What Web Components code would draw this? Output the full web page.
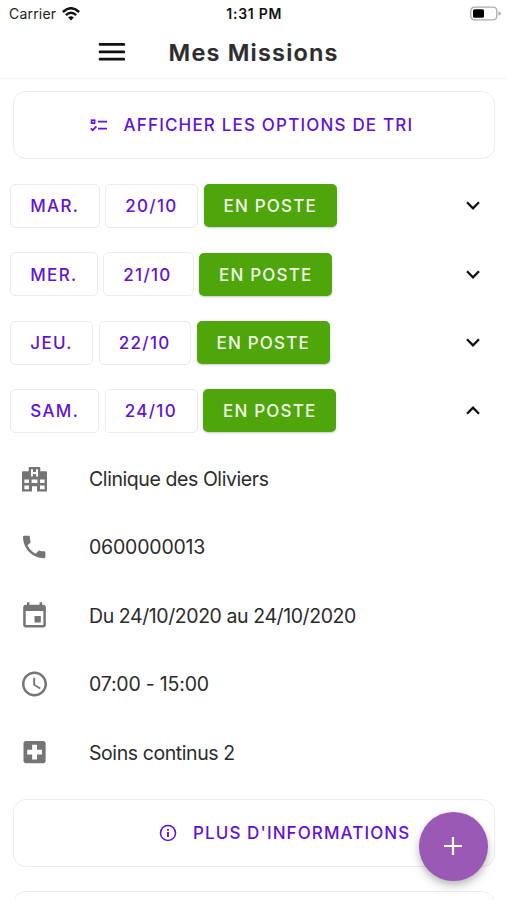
<!DOCTYPE html>
<html lang="fr">
<head>
<meta charset="utf-8">
<title>Mes Missions</title>
<style>
html, body { margin: 0; height: 900px; overflow: hidden; background: #fff; }
body { font-family: Inter, "Liberation Sans", sans-serif; color: #2b2b2b; }
</style>
</head>
<body>
<missions-app></missions-app>
<script>
const define = (name, html) => customElements.define(name, class extends HTMLElement {
  constructor() {
    super();
    this.attachShadow({ mode: 'open' }).innerHTML = html;
  }
});

const ICONS = {
  domain: '<path fill-rule="evenodd" d="M0 5.3Q0 4.3 1 4.3H6.7V1Q6.7 0 7.7 0H17.3Q18.3 0 18.3 1V4.3H24Q25 4.3 25 5.3V24.6H15V19.3H10V24.6H0ZM9 2.3V9.5H11V7H14V9.5H16V2.3H14V5H11V2.3ZM2.4 12.5V16.1H7V12.5ZM9.6 12.5V16.1H15.4V12.5ZM18 12.5V16.1H22.6V12.5ZM2.4 18.6V22.2H7V18.6ZM18 18.6V22.2H22.6V18.6Z"/>',
  phone: '<path transform="translate(-2.7 -2.9) scale(1.24)" d="M6.62 10.79c1.44 2.83 3.76 5.14 6.59 6.59l2.2-2.2c.27-.27.67-.36 1.02-.24 1.12.37 2.33.57 3.57.57.55 0 1 .45 1 1V20c0 .55-.45 1-1 1C10.61 21 3 13.39 3 4c0-.55.45-1 1-1h3.5c.55 0 1 .45 1 1 0 1.25.2 2.45.57 3.57.11.35.03.74-.25 1.02l-2.2 2.2z"/>',
  event: '<path transform="translate(-2.6 -3) scale(1.26)" d="M17 12h-5v5h5v-5zM16 1v2H8V1H6v2H5c-1.11 0-1.99.9-1.99 2L3 19c0 1.1.89 2 2 2h14c1.1 0 2-.9 2-2V5c0-1.1-.9-2-2-2h-1V1h-2zm3 18H5V8h14v11z"/>',
  clock: '<path transform="translate(-2.5 -2.9) scale(1.25)" d="M11.99 2C6.47 2 2 6.48 2 12s4.47 10 9.99 10C17.52 22 22 17.52 22 12S17.52 2 11.99 2zM12 20c-4.42 0-8-3.58-8-8s3.58-8 8-8 8 3.58 8 8-3.58 8-8 8zm.5-13H11v6l5.25 3.15.75-1.23-4.5-2.67z"/>',
  care: '<path transform="translate(-2.2 -2.6) scale(1.23)" d="M19 3H5c-1.1 0-1.99.9-1.99 2L3 19c0 1.1.9 2 2 2h14c1.1 0 2-.9 2-2V5c0-1.1-.9-2-2-2zm-1 11h-4v4h-4v-4H6v-4h4V6h4v4h4v4z"/>'
};

define('status-bar', `
<style>
:host { display: grid; grid-template-columns: 1fr auto 1fr; align-items: center; height: 27px; padding: 0 6px 0 9px; color: #222; box-sizing: border-box; font-size: 14px; }
.left { display: flex; align-items: center; gap: 6px; letter-spacing: .2px; }
.time { font-weight: 600; color: #111; font-size: 14px; letter-spacing: .73px; margin-left: -1.5px; }
.right { display: flex; justify-content: flex-end; }
svg { display: block; }
</style>
<div class="left"><span>Carrier</span>
<svg width="18" height="14" viewBox="0 0 18 14" fill="none" stroke="#111" stroke-width="2.4"><path d="M.9 5Q9-2.6 17.1 5M3.9 8.2Q9 3.2 14.1 8.2"/><path d="M6.2 10.4Q9 8 11.8 10.4L9 13.6Z" fill="#111" stroke="none"/></svg></div>
<span class="time">1:31 PM</span>
<div class="right"><svg width="31" height="16" viewBox="0 0 31 16"><rect x=".8" y="1.2" width="26" height="12.6" rx="3.6" fill="#fff" stroke="#aaa" stroke-width="1.3"/><rect x="3" y="3.3" width="11" height="8.4" rx="1.5"/><path d="M28.5 5.2Q31 5.9 31 7.4T28.5 9.6Z" fill="#aaa"/></svg></div>`);

define('app-header', `
<style>
:host { display: flex; align-items: center; height: 52px; padding: 0 0 0 98px; box-sizing: border-box; border-bottom: 1px solid #f5f5f5; }
svg { display: block; margin: -.4px 43.5px 0 0; }
h1 { margin: 0; font-size: 23.5px; line-height: 28px; font-weight: 600; letter-spacing: 1.2px; color: #2d2d2d; white-space: nowrap; -webkit-text-stroke: .2px #2d2d2d; }
</style>
<svg width="27" height="20" viewBox="0 0 27 20" stroke="#111" stroke-width="2.7" stroke-linecap="round"><path d="M2 2.4H26M2 9.9H26M2 17.2H26"/></svg>
<h1><slot></slot></h1>`);

define('outline-button', `
<style>
:host { display: flex; align-items: center; box-sizing: border-box; width: 482.5px; height: 68px; margin: 0 auto 0 12.5px; border: 1.5px solid #ececec; border-radius: 13px; padding-left: var(--lead, 76.5px); color: #6212d8; font-size: 17px; font-weight: 500; letter-spacing: var(--track, 1.18px); white-space: nowrap; }
::slotted(svg) { display: block; flex: none; margin-right: var(--icon-gap, 16.5px); }
</style>
<slot></slot>`);

define('day-chip', `
<style>
:host { display: flex; align-items: center; box-sizing: border-box; height: 44px; padding: 1px 0 0 19.3px; border: 1.3px solid #ebebeb; border-radius: 5px; color: #6212d8; font-size: 17px; font-weight: 500; letter-spacing: 1.3px; white-space: nowrap; }
:host([filled]) { height: 43px; background: #4ea60b; border: 0; padding-left: 20px; color: #f1f8e8; letter-spacing: 1.2px; box-shadow: 0 1px 2px rgba(0,0,0,.22); }
</style>
<slot></slot>`);

customElements.define('mission-row', class extends HTMLElement {
  constructor() {
    super();
    const a = n => this.getAttribute(n);
    const [w1, g1, w2, g2] = a('cols').split(' ');
    const d = this.hasAttribute('open') ? 'M2 8.7 8 2.7 14 8.7' : 'M2 2.3 8 8.3 14 2.3';
    this.attachShadow({ mode: 'open' }).innerHTML = `
<style>
:host { display: flex; align-items: center; height: 68.4px; padding: 0 26px 0 10px; box-sizing: border-box; }
svg { margin-left: auto; }
</style>
<day-chip style="width:${w1}px;margin-right:${g1}px">${a('day')}</day-chip>
<day-chip style="width:${w2}px;margin-right:${g2}px">${a('date')}</day-chip>
<day-chip filled style="width:133px">${a('status')}</day-chip>
<svg width="16" height="11" viewBox="0 0 16 11" fill="none" stroke="#111" stroke-width="2.3"><path d="${d}"/></svg>`;
  }
});

customElements.define('detail-row', class extends HTMLElement {
  constructor() {
    super();
    this.attachShadow({ mode: 'open' }).innerHTML = `
<style>
:host { display: flex; align-items: center; height: 68.4px; padding-left: 22px; box-sizing: border-box; font-size: 19.5px; letter-spacing: var(--track, -.42px); color: #2b2b2b; white-space: nowrap; }
svg { display: block; overflow: visible; margin-right: 42px; fill: #757575; }
span { margin-top: -.8px; }
</style>
<svg width="25" height="25" viewBox="0 0 25 25">${ICONS[this.getAttribute('icon')]}</svg><span><slot></slot></span>`;
  }
});

define('add-button', `
<style>
:host { position: absolute; left: 419px; top: 812px; width: 68.5px; height: 68.5px; border-radius: 50%; background: #9b59b6; display: flex; align-items: center; justify-content: center; box-shadow: 0 3px 6px rgba(0,0,0,.18), 0 6px 12px rgba(0,0,0,.12); }
</style>
<svg width="18" height="18" viewBox="0 0 18 18" stroke="#fff" stroke-width="2.2"><path d="M9 0V18M0 9H18"/></svg>`);

define('missions-app', `
<style>
:host { display: block; position: relative; width: 507px; height: 900px; overflow: hidden; background: #fff; }
main { display: flex; flex-direction: column; padding-top: 12.4px; }
.list { margin: 12.2px 0 11.8px; }
.next { margin-top: 24px; }
</style>
<status-bar></status-bar>
<app-header>Mes Missions</app-header>
<main>
<outline-button><svg width="17" height="13" viewBox="0 0 17 13" fill="none" stroke="currentColor" stroke-width="1.7"><rect x="1.6" y="1.2" width="3" height="3"/><path d="M8 2.7H17M8 9.6H17M.8 9.3 2.7 11.2 6.4 7.4"/></svg>AFFICHER LES OPTIONS DE TRI</outline-button>
<div class="list">
<mission-row day="MAR." date="20/10" status="EN POSTE" cols="89.5 5.5 93 5.5"></mission-row>
<mission-row day="MER." date="21/10" status="EN POSTE" cols="88 5 91 5"></mission-row>
<mission-row day="JEU." date="22/10" status="EN POSTE" cols="83 5.5 92.5 5.5"></mission-row>
<mission-row day="SAM." date="24/10" status="EN POSTE" cols="89 5.5 93 5.5" open></mission-row>
<detail-row icon="domain">Clinique des Oliviers</detail-row>
<detail-row icon="phone" style="--track:-.2px">0600000013</detail-row>
<detail-row icon="event">Du 24/10/2020 au 24/10/2020</detail-row>
<detail-row icon="clock" style="--track:-.2px">07:00 - 15:00</detail-row>
<detail-row icon="care">Soins continus 2</detail-row>
</div>
<outline-button style="--lead:145.5px;--track:1.1px;--icon-gap:16px"><svg width="18" height="18" viewBox="0 0 18 18" fill="none" stroke="currentColor" stroke-width="1.6"><circle cx="9" cy="9" r="7.5"/><path d="M9 8V13M9 5V6.7" stroke-width="1.9"/></svg>PLUS D'INFORMATIONS</outline-button>
<outline-button class="next"></outline-button>
</main>
<add-button></add-button>`);
</script>
</body>
</html>
